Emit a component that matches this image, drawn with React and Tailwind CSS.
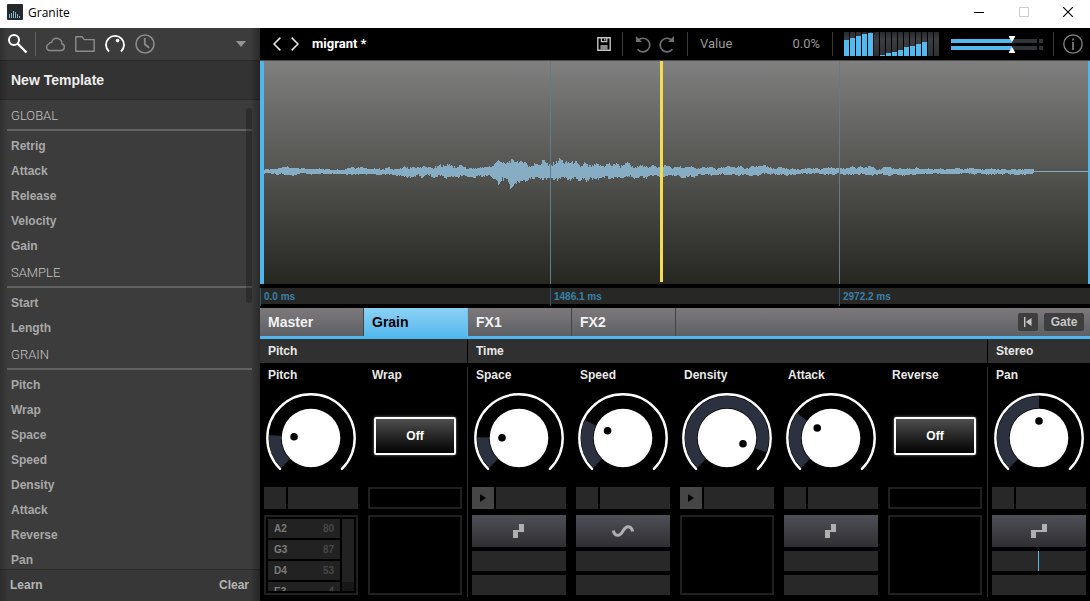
import { useState } from 'react'

const browserSections = [
  { title: 'GLOBAL', items: ['Retrig', 'Attack', 'Release', 'Velocity', 'Gain'] },
  { title: 'SAMPLE', items: ['Start', 'Length'] },
  {
    title: 'GRAIN',
    items: ['Pitch', 'Wrap', 'Space', 'Speed', 'Density', 'Attack', 'Reverse', 'Pan'],
  },
]

const tabs = ['Master', 'Grain', 'FX1', 'FX2']

const pitchNotes = [
  { note: 'A2', value: 80 },
  { note: 'G3', value: 87 },
  { note: 'D4', value: 53 },
  { note: 'E3', value: 4 },
]

const paramSections = [
  {
    title: 'Pitch',
    cols: 'grid-cols-2',
    params: [
      { name: 'Pitch', type: 'knob', angle: -86, notes: true },
      { name: 'Wrap', type: 'toggle' },
    ],
  },
  {
    title: 'Time',
    cols: 'grid-cols-5',
    params: [
      { name: 'Space', type: 'knob', angle: -89, armed: true, shape: 'step' },
      { name: 'Speed', type: 'knob', angle: -65, shape: 'sine' },
      { name: 'Density', type: 'knob', angle: 110, armed: true },
      { name: 'Attack', type: 'knob', angle: -54, shape: 'step' },
      { name: 'Reverse', type: 'toggle' },
    ],
  },
  {
    title: 'Stereo',
    cols: 'grid-cols-1',
    last: true,
    params: [{ name: 'Pan', type: 'knob', angle: 0, shape: 'wideStep', centered: true }],
  },
]

const meterLevels = [16, 18, 20, 22, 23, 0, 1, 3, 4, 6, 9, 10, 12, 14, 0, 0]

// [x, amplitude above the axis, amplitude below the axis]
const envelope = [
  [0, 2, 2], [20, 5, 4], [34, 3, 3], [60, 3, 3], [82, 3, 3], [90, 5, 5], [110, 4, 3],
  [135, 5, 5], [148, 6, 6], [166, 7, 6], [180, 9, 7], [192, 9, 6], [202, 5, 6],
  [222, 6, 6], [231, 9, 9], [239, 14, 17], [249, 12, 15], [258, 10, 9], [268, 12, 10],
  [286, 13, 8], [301, 13, 8], [315, 8, 10], [326, 13, 9], [336, 8, 7], [356, 8, 9],
  [371, 9, 8], [386, 7, 6], [408, 6, 6], [424, 5, 8], [440, 4, 4], [456, 4, 3],
  [481, 6, 4], [511, 5, 4], [536, 3, 3], [571, 4, 3], [606, 5, 4], [631, 4, 4],
  [661, 3, 3], [686, 3, 2], [716, 3, 3], [746, 2, 3], [770, 3, 3],
]

const amplitudeAt = (x, side) => {
  const i = Math.max(1, envelope.findIndex((p) => p[0] >= x))
  const a = envelope[i - 1]
  const b = envelope[i]
  const t = (x - a[0]) / (b[0] - a[0])
  return a[side] + (b[side] - a[side]) * t
}

const noise = (n) => {
  const v = Math.sin(n * 12.9898) * 43758.5453
  return v - Math.floor(v)
}

// slow swells every few pixels with finer grain on top
const ripple = (x) => {
  const step = Math.floor(x / 4)
  const t = (x % 4) / 4
  const slow = noise(step + 31) * (1 - t) + noise(step + 32) * t
  return 0.2 + 0.65 * slow + 0.3 * noise(x + 7)
}

const wavePath = Array.from({ length: 770 }, (_, x) => {
  const up = Math.round(amplitudeAt(x, 1) * ripple(x))
  const down = Math.round(amplitudeAt(x, 2) * ripple(x + 902))
  return `M${x} ${110 - up}h1V${111 + down}h-1z`
}).join('')

const Divider = ({ className }) => <div className={`h-6 w-px shrink-0 bg-[#3a3a3a] ${className}`} />

const TitleBar = () => (
  <header className="flex h-7 shrink-0 items-center bg-white pl-[7px] text-black">
    <svg width="16" height="16" viewBox="0 0 16 16" className="mr-[5px] mb-1">
      <rect width="16" height="16" rx="1" fill="#26292c" />
      <path
        d="M2.5 10v4M4.5 9v5M6.5 7v7M8.5 8v6M10.5 10v4M12.5 12v2"
        stroke="#7fb4cc"
        strokeWidth="1"
      />
    </svg>
    <h1 className="flex-1 pb-0.5 font-['Open_Sans',sans-serif] text-xs">Granite</h1>
    <button type="button" aria-label="Minimize" className="flex h-full w-[45px] items-center justify-center pb-1">
      <svg width="10" height="10" viewBox="0 0 10 10">
        <path d="M0 5.5h10" stroke="#000" />
      </svg>
    </button>
    <button type="button" aria-label="Maximize" className="flex h-full w-[45px] items-center justify-center pb-1">
      <svg width="10" height="10" viewBox="0 0 10 10">
        <rect x="0.5" y="0.5" width="9" height="9" fill="none" stroke="#ccc" />
      </svg>
    </button>
    <button type="button" aria-label="Close" className="flex h-full w-11 items-center justify-center pb-1">
      <svg width="10" height="10" viewBox="0 0 10 10">
        <path d="M0 0l10 10M10 0L0 10" stroke="#000" strokeWidth="1.1" />
      </svg>
    </button>
  </header>
)

const IconButton = ({ label, children }) => (
  <button type="button" aria-label={label} className="size-5 shrink-0">
    <svg width="20" height="20" viewBox="0 0 20 20" fill="none">
      {children}
    </svg>
  </button>
)

const Sidebar = () => (
  <aside className="flex w-65 shrink-0 flex-col bg-[linear-gradient(to_right,#303030,#3c3c3c_8px,#3c3c3c_calc(100%-10px),#2a2a2a)]">
    <div className="flex h-8 shrink-0 items-center pr-3.5 pl-2">
      <IconButton label="Search">
        <circle cx="6" cy="6" r="5" stroke="#fff" strokeWidth="2" />
        <path d="M9.5 9.5l9 9" stroke="#fff" strokeWidth="2.4" />
      </IconButton>
      <Divider className="mr-[9px] ml-[7px] bg-[#606060]" />
      <div className="flex gap-2.5">
        <IconButton label="Cloud">
          <path
            d="M4 16.500h11.800a3.400 3.400 0 0 0 .9-6.700 4.200 4.200 0 0 0-.7-3.400 4 4 0 0 0-1.800-1.200 5.200 5.200 0 0 0-6 .3 4.500 4.500 0 0 0-1.500 2.700 3.200 3.200 0 0 0-2.800 1.700A3.500 3.500 0 0 0 4 16.500z"
            stroke="#8c8c8c"
            strokeWidth="1.4"
          />
        </IconButton>
        <IconButton label="Folder">
          <path
            d="M.8 17.2V2.8h6.4l2 2.8h10v11.6z"
            stroke="#8c8c8c"
            strokeWidth="1.4"
            strokeLinejoin="round"
          />
        </IconButton>
        <IconButton label="Parameters">
          <path d="M4 17.5a9 9 0 1 1 12 0" stroke="#fff" strokeWidth="1.8" />
          <circle cx="12.6" cy="6.6" r="1.8" fill="#fff" />
        </IconButton>
        <IconButton label="History">
          <circle cx="10" cy="10" r="9" stroke="#8c8c8c" strokeWidth="1.6" />
          <path d="M9.8 4v6.2l4.4 3.6" stroke="#8c8c8c" strokeWidth="1.8" />
        </IconButton>
      </div>
      <button type="button" aria-label="Template menu" className="ml-auto">
        <svg width="10" height="6" viewBox="0 0 10 6">
          <path d="M0 0h10L5 6z" fill="#959595" />
        </svg>
      </button>
    </div>

    <h2 className="flex h-10 shrink-0 items-center border-y border-black/20 bg-black/15 pl-[11px] text-sm font-bold text-[#eee]">
      New Template
    </h2>

    <div className="relative min-h-0 flex-1 overflow-hidden pt-px pr-2 pl-[7px]">
      {browserSections.map((section) => (
        <section key={section.title}>
          <h3 className="mb-0.5 flex h-[30px] items-center border-b-2 border-[#626262] pt-0.5 pl-1 font-['Roboto',sans-serif] text-[13px] font-light text-[#c4c4c4]">
            {section.title}
          </h3>
          <ul>
            {section.items.map((item) => (
              <li key={item} className="h-[25px]">
                <button type="button" className="flex h-full w-full items-center pl-1 text-xs font-bold text-[#a8a8a8]">
                  {item}
                </button>
              </li>
            ))}
          </ul>
        </section>
      ))}
      <div className="absolute top-2 right-2 h-[195px] w-1.5 rounded-full bg-black/25" />
    </div>

    <footer className="flex h-8 shrink-0 items-center justify-between border-t border-black/20 bg-black/8 pr-[11px] pb-0.5 pl-2.5 text-xs font-bold text-[#b4b4b4]">
      <button type="button">Learn</button>
      <button type="button">Clear</button>
    </footer>
  </aside>
)

const Meter = () => (
  <svg width="95" height="24" viewBox="0 0 95 24" shapeRendering="crispEdges" className="shrink-0">
    <defs>
      <linearGradient id="meterBg" x1="0" y1="0" x2="0" y2="1">
        <stop offset="0" stopColor="#282b2e" />
        <stop offset="0.3" stopColor="#3a3d41" />
        <stop offset="1" stopColor="#2e3033" />
      </linearGradient>
    </defs>
    {meterLevels.map((level, i) => (
      <g key={i}>
        <rect x={i * 6} y="0" width="5" height="24" fill="url(#meterBg)" />
        <rect x={i * 6} y={24 - level} width="5" height={level} fill="#54b9ee" />
      </g>
    ))}
  </svg>
)

const Volume = () => (
  <label className="relative block shrink-0">
    <input type="range" aria-label="Volume" defaultValue="66" className="sr-only" />
    <svg width="92" height="18" viewBox="0 0 92 18">
      <g fill="#303337">
        <path d="M0 4h86v4H0zM88 4h4v4h-4zM0 11h86v4H0zM88 11h4v4h-4z" />
      </g>
      <path d="M0 4h61v4H0zM0 11h61v4H0z" fill="#54b9ee" />
      <path d="M58 1h6v1l-3 5-3-5zM58 18h6v-1l-3-5-3 5z" fill="#fff" />
    </svg>
  </label>
)

const Toolbar = () => (
  <div className="flex h-[33px] shrink-0 items-center border-b border-[#4a4a4a] bg-black pr-[7px] pl-[13px] font-['Roboto',sans-serif] text-[13px]">
    <button type="button" aria-label="Previous preset" className="mr-2.5">
      <svg width="8" height="14" viewBox="0 0 8 14" fill="none">
        <path d="M7.4.6L1 7l6.4 6.4" stroke="#e8e8e8" strokeWidth="1.5" />
      </svg>
    </button>
    <button type="button" aria-label="Next preset" className="mr-[13px]">
      <svg width="8" height="14" viewBox="0 0 8 14" fill="none">
        <path d="M.6.6L7 7 .6 13.4" stroke="#e8e8e8" strokeWidth="1.5" />
      </svg>
    </button>
    <span className="flex-1 font-bold text-white">migrant *</span>
    <button type="button" aria-label="Save">
      <svg width="14" height="14" viewBox="0 0 14 14" fill="none">
        <path d="M.8.8h12.4v12.4H.8z" stroke="#c4c4c4" strokeWidth="1.4" />
        <path d="M4.4 1v3.6h5.4V1M7.8 1.4v2" stroke="#c4c4c4" strokeWidth="1.2" />
        <path d="M3.4 8h7.2v5H3.4z" fill="#8a8a8a" />
      </svg>
    </button>
    <Divider className="mr-3 ml-[11px]" />
    <div className="flex gap-2 text-[#707070]">
      <button type="button" aria-label="Undo">
        <svg width="16" height="17" viewBox="0 0 16 17" fill="none">
          <path d="M3.2 4.2A6.800 6.800 0 1 1 2.600 13.200" stroke="currentColor" strokeWidth="1.700" />
          <path d="M1 0v6h6z" fill="currentColor" />
        </svg>
      </button>
      <button type="button" aria-label="Redo">
        <svg width="16" height="17" viewBox="0 0 16 17" fill="none">
          <path d="M12.800 4.200A6.800 6.800 0 1 0 13.400 13.200" stroke="currentColor" strokeWidth="1.700" />
          <path d="M15 0v6H9z" fill="currentColor" />
        </svg>
      </button>
    </div>
    <Divider className="mx-3" />
    <div className="flex w-30 shrink-0 justify-between text-[#9a9a9a]">
      <span>Value</span>
      <span>0.0%</span>
    </div>
    <Divider className="mr-[11px] ml-3" />
    <Meter />
    <div className="ml-3">
      <Volume />
    </div>
    <Divider className="mr-[9px] ml-2.5" />
    <button type="button" aria-label="Info">
      <svg width="20" height="20" viewBox="0 0 20 20" fill="none">
        <circle cx="10" cy="10" r="9.2" stroke="#858585" strokeWidth="1.3" />
        <path d="M10 8v8M10 4.4v2" stroke="#858585" strokeWidth="1.6" />
      </svg>
    </button>
  </div>
)

const Waveform = () => (
  <div className="flex min-h-0 flex-1 flex-col border-r-2 border-l-4 border-[#4fb7ee] bg-linear-to-b from-[#808080] via-[#535350] to-[#272722]">
    <svg
      viewBox="0 0 824 223"
      preserveAspectRatio="none"
      shapeRendering="crispEdges"
      className="block min-h-0 w-full flex-1"
    >
      <path d={wavePath} fill="#86adc3" />
      <rect x="770" y="110" width="54" height="1" fill="#86adc3" />
      <rect x="286" y="0" width="1" height="223" fill="#5f7d88" />
      <rect x="575" y="0" width="1" height="223" fill="#687980" />
      <rect x="396" y="0" width="3" height="221" fill="#f4dd4a" />
    </svg>
  </div>
)

const Ruler = () => (
  <div className="shrink-0 bg-black py-1">
    <div className="grid h-4 grid-cols-[290fr_289fr_251fr] bg-[#272726] text-[10px] leading-[18px] font-bold text-[#3b81a6]">
      <span className="border-l border-[#2b566c] pl-[3px]">0.0 ms</span>
      <span className="border-l border-[#2b566c] pl-[3px]">1486.1 ms</span>
      <span className="border-l border-[#2b566c] pl-[3px]">2972.2 ms</span>
    </div>
  </div>
)

const TabBar = () => {
  const [active, setActive] = useState('Grain')

  return (
    <nav className="flex shrink-0 items-center border-b-[3px] border-[#4fb7ee] bg-linear-to-b from-[#7d797b] to-[#5e6065]">
      {tabs.map((tab) => (
        <button
          key={tab}
          type="button"
          onClick={() => setActive(tab)}
          className={`h-7 w-26 border-r pl-2 text-left text-sm font-bold ${
            tab === active
              ? 'border-[#6ec4f1] bg-linear-to-b from-[#8bd1f5] to-[#55b9ee] text-black'
              : 'border-[#434345] text-[#f2f2f2]'
          }`}
        >
          {tab}
        </button>
      ))}
      <button
        type="button"
        aria-label="Restart"
        className="ml-auto flex h-[18px] w-5 items-center justify-center rounded-xs bg-[#3e3e3e]"
      >
        <svg width="8" height="10" viewBox="0 0 8 10">
          <path d="M0 0h1.4v10H0zM1.8 5L7.5 1v8z" fill="#c8c8c8" />
        </svg>
      </button>
      <button
        type="button"
        className="mr-1.5 ml-1.5 h-[18px] w-10 rounded-xs bg-[#3e3e3e] text-xs font-bold text-[#c8c8c8]"
      >
        Gate
      </button>
    </nav>
  )
}

const point = (angle, radius) => {
  const rad = (angle * Math.PI) / 180
  return [45 + Math.sin(rad) * radius, 45 - Math.cos(rad) * radius]
}

const Knob = ({ id, initial }) => {
  const [angle, setAngle] = useState(initial)
  const large = angle + 135 > 180 ? 1 : 0
  const [x1, y1] = point(-135, 42)
  const [x2, y2] = point(angle, 42)
  const [dotX, dotY] = point(angle, 17)

  return (
    <div className="relative mt-1.5">
      <input
        id={id}
        type="range"
        min="-135"
        max="135"
        value={angle}
        onChange={(e) => setAngle(Number(e.target.value))}
        className="peer sr-only"
      />
      <svg width="90" height="90" viewBox="0 0 90 90" fill="none">
        <path d={`M45 45L${x1} ${y1}A42 42 0 ${large} 1 ${x2} ${y2}z`} fill="#2c313f" />
        <circle cx="45" cy="45" r="30" fill="#000" />
        <circle cx="45" cy="45" r="29.3" fill="#fff" />
        <circle cx={dotX} cy={dotY} r="3.8" fill="#000" />
        <path
          d="M14.1 75.9A43.7 43.7 0 1 1 75.9 75.9"
          stroke="#fff"
          strokeWidth="2.4"
          strokeLinecap="round"
        />
      </svg>
    </div>
  )
}

const Toggle = ({ id }) => {
  const [on, setOn] = useState(false)

  return (
    <button
      id={id}
      type="button"
      onClick={() => setOn(!on)}
      className="mt-[30px] h-[38px] w-[82px] rounded-xs border-2 border-white bg-linear-to-b from-[#505050] to-[#050505] text-xs font-bold text-white shadow-[0_0_3px_#ffffff80]"
    >
      {on ? 'On' : 'Off'}
    </button>
  )
}

const ShapeIcon = ({ shape }) => {
  if (shape === 'sine') {
    return (
      <svg width="22" height="12" viewBox="0 0 22 12" fill="none">
        <path
          d="M1.3 5.5C2 8.800 3.800 10.300 6 10.300 11 10.300 11 1.700 16 1.700c2.200 0 3.900 1.500 4.700 4.800"
          stroke="#b0b0b0"
          strokeWidth="3"
        />
      </svg>
    )
  }
  if (shape === 'wideStep') {
    return (
      <svg width="16" height="14" viewBox="0 0 16 14">
        <path d="M0 6h11V0h5v8H5v6H0z" fill="#b0b0b0" />
      </svg>
    )
  }
  return (
    <svg width="12" height="14" viewBox="0 0 12 14">
      <path d="M0 6h6V0h5v8H5v6H0z" fill="#b0b0b0" />
    </svg>
  )
}

const NoteList = () => (
  <div className="flex h-20 gap-0.5 overflow-hidden border-2 border-[#202020] p-0.5">
    <ul className="flex flex-1 flex-col gap-0.5 overflow-hidden">
      {pitchNotes.map(({ note, value }) => (
        <li
          key={note}
          className="flex h-[19px] shrink-0 items-center justify-between bg-[#222] px-1.5 text-[10px] font-bold"
        >
          <span className="text-[#7c7c7c]">{note}</span>
          <span className="text-[#484848]">{value}</span>
        </li>
      ))}
    </ul>
    <div className="w-3 bg-[#171717]">
      <div className="h-[63px] bg-[#222]" />
    </div>
  </div>
)

const Modulation = ({ param }) => {
  if (param.notes) return <NoteList />
  if (!param.shape) return <div className="h-20 border-2 border-[#202020]" />
  return (
    <div className="flex flex-col gap-1">
      <button
        type="button"
        aria-label={`${param.name} modulation shape`}
        className="flex h-8 items-center justify-center bg-linear-to-b from-[#4f4f58] to-[#2f2f33]"
      >
        <ShapeIcon shape={param.shape} />
      </button>
      <div className="flex h-5 justify-center bg-[#282828]">
        {param.centered && <div className="mr-px w-px bg-[#54b9ee]" />}
      </div>
      <div className="h-5 bg-[#282828]" />
    </div>
  )
}

const Param = ({ param, section, last }) => {
  const id = `${section}-${param.name}`.toLowerCase()

  return (
    <div className={`flex flex-col pl-1 ${last ? 'pr-1' : 'pr-1.5'}`}>
      <label htmlFor={id} className="h-4 pl-1 text-xs leading-4 font-bold text-[#e8e8e8]">
        {param.name}
      </label>
      <div className="mt-1 flex h-25 items-start justify-center">
        {param.type === 'knob' ? <Knob id={id} initial={param.angle} /> : <Toggle id={id} />}
      </div>
      {param.type === 'knob' ? (
        <div className="mb-1.5 flex h-[22px] gap-0.5">
          <button
            type="button"
            aria-label={`${param.name} modulation`}
            className={`flex w-[22px] items-center justify-center ${param.armed ? 'bg-[#464646]' : 'bg-[#282828]'}`}
          >
            {param.armed && (
              <svg width="6" height="8" viewBox="0 0 6 8">
                <path d="M0 0l6 4-6 4z" fill="#000" />
              </svg>
            )}
          </button>
          <div className="flex-1 bg-[#282828]" />
        </div>
      ) : (
        <div className="mb-1.5 h-[22px] border-2 border-[#202020]" />
      )}
      <Modulation param={param} />
    </div>
  )
}

const Panel = () => (
  <div className="grid shrink-0 grid-cols-[208fr_520fr_102fr] bg-black">
    {paramSections.map((section) => (
      <section key={section.title}>
        <h2
          className={`h-6 bg-[#303030] pl-2 text-xs leading-6 font-bold text-[#e8e8e8] ${
            section.last ? '' : 'border-r border-black'
          }`}
        >
          {section.title}
        </h2>
        <div
          className={`my-1 grid pb-0.5 ${section.cols} ${
            section.last ? '' : 'shadow-[inset_-1px_0_0_#303030]'
          }`}
        >
          {section.params.map((param) => (
            <Param key={param.name} param={param} section={section.title} last={section.last} />
          ))}
        </div>
      </section>
    ))}
  </div>
)

const App = () => (
  <div className="flex h-screen flex-col overflow-hidden bg-black font-['Liberation_Sans',Arial,sans-serif]">
    <TitleBar />
    <div className="flex min-h-0 flex-1">
      <Sidebar />
      <main className="flex min-w-0 flex-1 flex-col">
        <Toolbar />
        <Waveform />
        <Ruler />
        <TabBar />
        <Panel />
      </main>
    </div>
  </div>
)

export default App
